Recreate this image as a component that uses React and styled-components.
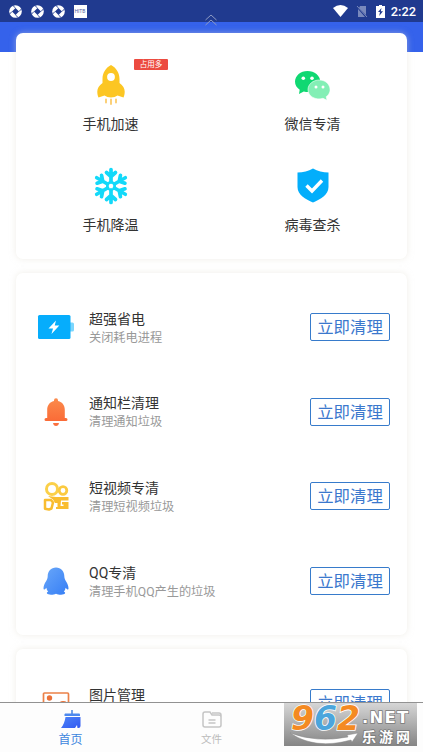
import React from 'react'
import styled, { createGlobalStyle } from 'styled-components'

const GlobalStyle = createGlobalStyle`
  * {
    box-sizing: border-box;
  }

  body {
    margin: 0;
    background: #fff;
    font-family: Roboto, 'Noto Sans CJK SC', sans-serif;
  }

  svg {
    display: block;
  }
`

const Screen = styled.div`
  position: relative;
  display: flex;
  flex-direction: column;
  width: 423px;
  height: 752px;
  overflow: hidden;
`

const StatusBar = styled.header`
  display: flex;
  flex: none;
  justify-content: space-between;
  align-items: center;
  height: 22px;
  padding: 0 7px 0 9px;
  background: #203a8f;
  color: #fff;
`

const StatusGroup = styled.div`
  display: flex;
  align-items: center;
  gap: ${props => props.$gap}px;
`

const Notice = styled.span`
  width: 13px;
  height: 13px;
  background: #fff;
  color: #52639f;
  font-size: 5px;
  line-height: 13px;
  text-align: center;
`

const Clock = styled.span`
  margin-left: -2px;
  padding-top: 1px;
  font-size: 12.8px;
  font-weight: 500;
  line-height: 22px;
`

const PullHint = styled.div`
  position: absolute;
  top: 14px;
  left: 205px;
`

const Content = styled.main`
  display: flex;
  flex: 1;
  flex-direction: column;
  gap: 14px;
  min-height: 0;
  padding: 11px 16px 0;
  overflow: hidden;
  background: linear-gradient(#3562eb 30px, #fff 30px);
`

const Card = styled.section`
  flex: none;
  border-radius: 7px;
  background: #fff;
  box-shadow: 0 0 6px rgba(225, 222, 210, .5);
`

const ToolCard = styled(Card)`
  display: grid;
  grid-template-columns: 202px 202px;
  grid-auto-rows: 101px;
  justify-content: center;
  height: 226px;
  padding-top: 32px;
`

const Tool = styled.div`
  position: relative;
  display: flex;
  flex-direction: column;
  align-items: center;
  color: #333;
  font-size: 14px;
  line-height: 20px;

  svg {
    margin-bottom: 9px;
  }
`

const Tag = styled.span`
  position: absolute;
  top: -6px;
  left: 124.5px;
  width: 34px;
  height: 11px;
  border-radius: 1px;
  background: #ec4b40;
  color: #fff;
  font-size: 7.5px;
  line-height: 11px;
  text-align: center;
`

const ListCard = styled(Card)`
  padding: 12px 17px 11.5px 20px;
`

const Row = styled.div`
  display: flex;
  align-items: center;
  height: 84.6px;
`

const RowIcon = styled.div`
  display: flex;
  flex: none;
  justify-content: center;
  width: 40px;
  margin-right: 13px;
`

const RowText = styled.div`
  flex: 1;
  padding-top: 2px;
  white-space: nowrap;
`

const Title = styled.div`
  color: #333;
  font-size: 14px;
  line-height: 19px;
`

const Subtitle = styled.div`
  color: #999;
  font-size: 12.2px;
  line-height: 18px;
`

const CleanButton = styled.button`
  flex: none;
  width: 80px;
  height: 28px;
  padding: 1px 0 0;
  border: 1px solid #377bcb;
  border-radius: 2px;
  background: #fff;
  color: #3b78cd;
  font-family: inherit;
  font-size: 16.4px;
  line-height: 25px;
  white-space: nowrap;
`

const TabBar = styled.nav`
  display: flex;
  flex: none;
  height: 50px;
  border-top: 1px solid #929292;
  background: #fdfdfd;
`

const Tab = styled.div`
  display: flex;
  flex: 0 0 141px;
  flex-direction: column;
  align-items: center;
  padding-top: 6px;
  color: ${props => (props.$active ? '#3d86de' : '#bcbcbc')};
  font-size: ${props => (props.$active ? 12 : 10.5)}px;
  line-height: 18px;

  svg {
    margin-bottom: 2px;
  }
`

const Watermark = styled.div`
  position: absolute;
  top: 703px;
  left: 284px;
  display: flex;
  width: 133px;
  height: 43px;
  padding: 3px 0 0 7px;
  background: linear-gradient(#d6d6d6, #858585);
  white-space: nowrap;
`

const MarkNumber = styled.div`
  width: 71px;
  font-family: 'DejaVu Sans', sans-serif;
  font-size: 33px;
  font-style: italic;
  font-weight: bold;
  line-height: 26px;
  color: #f48a22;
  paint-order: stroke fill;
  -webkit-text-stroke: 1.6px #fff;

  em {
    color: #4ba5dc;
  }
`

const MarkSide = styled.div`
  display: flex;
  flex-direction: column;
  padding-top: 2px;
`

const MarkText = styled.div`
  color: #fff;
  font-family: ${props => (props.$latin ? "'DejaVu Sans'" : "'Noto Sans CJK SC'")}, sans-serif;
  font-size: ${props => props.$size}px;
  font-weight: bold;
  letter-spacing: ${props => props.$spacing}px;
  line-height: 19px;
  paint-order: stroke fill;
  -webkit-text-stroke: 1.5px #777;
`

const MarkArrow = styled.svg`
  position: absolute;
  top: 29px;
  left: 6px;
`

const SwirlIcon = () => (
  <svg width="13" height="13" viewBox="0 0 13 13">
    <circle cx="6.500" cy="6.500" r="6.300" fill="#fff" />
    <path d="M6.500 3L10 6.500 6.500 10 3 6.500z" fill="#203a8f" />
    <path d="M6.500 3L4 .6M10 6.500L12.400 4M6.500 10L9 12.400M3 6.500L.6 9" stroke="#203a8f" strokeWidth=".9" />
  </svg>
)

const WifiIcon = () => (
  <svg width="15" height="12" viewBox="0 0 15 12">
    <path d="M0 3Q7.500-3 15 3L7.500 12z" fill="#fff" />
  </svg>
)

const NoSimIcon = () => (
  <svg width="12" height="13" viewBox="0 0 12 13" opacity=".4">
    <path d="M4 1h6v9L3 3zM2 4l7 8H2z" fill="#fff" />
    <path d="M1 1l10 11" stroke="#fff" />
  </svg>
)

const ChargeIcon = () => (
  <svg width="9" height="13" viewBox="0 0 9 13">
    <path d="M3 0h3v1h3v12H0V1h3z" fill="#fff" />
    <path d="M5.500 3L2 7h2l-.8 4L7 6.200H4.800z" fill="#203a8f" />
  </svg>
)

const RocketIcon = () => (
  <svg width="30" height="40" viewBox="0 0 30 40">
    <path d="M15 0C9.500 3 6.500 8 6.500 14v4C3 20.500 1.300 23.500 1.300 26.500c0 2 .3 4 1.200 6L8.500 30.500Q11 32.500 15 32.500T21.500 30.500l6 2c.9-2 1.200-4 1.200-6 0-3-1.700-6-5.200-8.500v-4C23.500 8 20.500 3 15 0z" fill="#fcc623" />
    <circle cx="15" cy="12" r="3.900" fill="#fff" />
    <path d="M10 34.500v3M15 34.500v4.500M20 34.500v3" stroke="#fbd078" strokeWidth="2" strokeLinecap="round" />
  </svg>
)

const WechatIcon = () => (
  <svg width="36" height="40" viewBox="0 0 36 40">
    <path d="M12.500 6C5.500 6 0 10.700 0 16.500c0 3.500 1.800 6.200 4.700 8.200L4 29l4.800-2.600c8 2.300 16.500-2 16.500-9.900C25.300 10.700 19.500 6 12.500 6z" fill="#10d872" />
    <circle cx="8.300" cy="13.200" r="1.800" fill="#fff" />
    <circle cx="17" cy="13.200" r="1.800" fill="#fff" />
    <path d="M24.500 15C18 15 13 19.200 13 24.700c0 6.700 7.700 10.800 15 8.600l4 2-.8-3.600C39 26 34 15 24.500 15z" fill="#83efb5" stroke="#fff" strokeWidth=".6" />
    <circle cx="21" cy="22" r="1.500" fill="#fff" />
    <circle cx="28" cy="22" r="1.500" fill="#fff" />
  </svg>
)

const SnowIcon = () => (
  <svg width="36" height="40" viewBox="-18 -20 36 40">
    <g stroke="#13d9f9" strokeWidth="3.700" strokeLinecap="round" strokeLinejoin="round" fill="none">
      {[0, 60, 120, 180, 240, 300].map(angle => (
        <path key={angle} transform={`rotate(${angle})`} d="M0-4v-12.500M-4.500-13.500L0-9.500l4.500-4" />
      ))}
      <circle r="3.800" strokeWidth="2.500" />
    </g>
  </svg>
)

const ShieldIcon = () => (
  <svg width="32" height="40" viewBox="0 0 32 40">
    <path d="M16 2.500Q9 6.500 .5 6.500V21c0 7.500 8 12.500 15.500 15.500C23.500 33.500 31.500 28.500 31.500 21V6.500Q23 6.500 16 2.500z" fill="#03aefb" />
    <path d="M9.500 19.500l5.500 5.500 10-10.500" fill="none" stroke="#fff" strokeWidth="3.400" />
  </svg>
)

const BatteryIcon = () => (
  <svg width="38" height="24" viewBox="0 0 38 24">
    <rect x="31" y="7.500" width="6" height="9" rx="1.500" fill="#7bd6fd" />
    <rect x="1" y="0" width="32.500" height="24" rx="1.500" fill="#06adfc" />
    <path d="M19 5.500l-7.500 8H16L14.500 19l7.800-8.500h-4.600z" fill="#fff" />
  </svg>
)

const BellIcon = () => (
  <svg width="24" height="28" viewBox="0 0 24 28">
    <linearGradient id="bell" x2="0" y2="1">
      <stop stopColor="#fb8b4c" />
      <stop offset="1" stopColor="#fa6b37" />
    </linearGradient>
    <path d="M10 2.200a2 2 0 014 0v.8c4.500 1 6.800 4.500 6.800 9v8h1.200a1.500 1.500 0 010 3H2a1.500 1.500 0 010-3h1.200v-8c0-4.500 2.300-8 6.800-9z" fill="url(#bell)" />
    <path d="M9 25h6q-.5 3-3 3t-3-3z" fill="#fa7140" />
  </svg>
)

const VideoIcon = () => (
  <svg width="26" height="30" viewBox="0 0 26 30">
    <g fill="none" stroke="#f9bd30" strokeLinejoin="round">
      <circle cx="9" cy="8" r="5.500" strokeWidth="3" stroke="#fbd049" />
      <circle cx="20" cy="9.500" r="3.800" strokeWidth="2.800" stroke="#fbca40" />
      <path d="M2 19h6l2 2.500-1.500 6L6 28.500l-4-.8z" strokeWidth="2.500" />
    </g>
    <path d="M5 15l8 1h12.500v3.500H18l-.5 5.500h3v-1.500H19V21h6.500v7H13v-2h1.500v-4H12l-2-3.500z" fill="#f9bd30" />
  </svg>
)

const PenguinIcon = () => (
  <svg width="26" height="28" viewBox="0 0 26 28">
    <linearGradient id="penguin" x2="1" y2="1">
      <stop stopColor="#69a7f9" />
      <stop offset="1" stopColor="#367ef5" />
    </linearGradient>
    <path d="M13 .5C8 .5 4.700 4.200 4.700 9c0 2-.5 3-1.500 5C1.300 17 .5 19 .5 21.500c0 1.800 1.200 1.300 3-.7 0 1.500.6 2.700 1.700 3.700-2.500 1.200-1.400 3.200 2.800 3.200 2 0 3.500-.3 5-1 1.500.7 3 1 5 1 4.200 0 5.300-2 2.800-3.200 1.100-1 1.700-2.200 1.700-3.700 1.800 2 3 2.500 3 .7 0-2.500-.8-4.500-2.700-7.500-1-2-1.500-3-1.500-5C21.300 4.200 18 .5 13 .5z" fill="url(#penguin)" />
  </svg>
)

const PictureIcon = () => (
  <svg width="28" height="22" viewBox="0 0 28 22">
    <rect x="1.500" y="1" width="25" height="20" rx="1" fill="none" stroke="#eb8148" strokeWidth="1.700" />
    <circle cx="7.500" cy="6" r="2.700" fill="#eb7138" />
    <path d="M3 20l8-6 4 2q1-7 6-7t4 4v7z" fill="#eb7138" />
  </svg>
)

const BroomIcon = () => (
  <svg width="22" height="20" viewBox="0 0 22 20">
    <linearGradient id="broom" x2="1" y2="1">
      <stop stopColor="#4d84f7" />
      <stop offset="1" stopColor="#3159f2" />
    </linearGradient>
    <path d="M12 1v4" stroke="#4582df" strokeWidth="1.500" />
    <path d="M5 4.500h14a1 1 0 011 1V7H4.500V5.500z" fill="#4c88ee" />
    <path d="M5.500 8h15v9q0 2-2 2h-1l-.5-3-2 3H1Q4.500 15 5.500 8z" fill="url(#broom)" />
  </svg>
)

const FolderIcon = () => (
  <svg width="22" height="20" viewBox="0 0 22 20" fill="none" stroke="#c5c5c5" strokeWidth="1.500">
    <path d="M2 16V5q0-2 2-2h5l2 3h7q2 0 2 2v8q0 2-2 2H4q-2 0-2-2zM11 4h7q2 0 2 2v3M7.500 11h7M7.500 14h7" />
  </svg>
)

const tools = [
  { label: '手机加速', icon: <RocketIcon />, tag: '占用多' },
  { label: '微信专清', icon: <WechatIcon /> },
  { label: '手机降温', icon: <SnowIcon /> },
  { label: '病毒查杀', icon: <ShieldIcon /> }
]

const cleaners = [
  { title: '超强省电', subtitle: '关闭耗电进程', icon: <BatteryIcon /> },
  { title: '通知栏清理', subtitle: '清理通知垃圾', icon: <BellIcon /> },
  { title: '短视频专清', subtitle: '清理短视频垃圾', icon: <VideoIcon /> },
  { title: 'QQ专清', subtitle: '清理手机QQ产生的垃圾', icon: <PenguinIcon /> }
]

// the subtitle of this row lies below the fold
const files = [
  { title: '图片管理', subtitle: '\u00a0', icon: <PictureIcon /> }
]

const CleanerList = ({ items }) => (
  <ListCard>
    {items.map(item => (
      <Row key={item.title}>
        <RowIcon>{item.icon}</RowIcon>
        <RowText>
          <Title>{item.title}</Title>
          <Subtitle>{item.subtitle}</Subtitle>
        </RowText>
        <CleanButton>立即清理</CleanButton>
      </Row>
    ))}
  </ListCard>
)

export default function App() {
  return (
    <Screen>
      <GlobalStyle />
      <StatusBar>
        <StatusGroup $gap={8.5}>
          <SwirlIcon />
          <SwirlIcon />
          <SwirlIcon />
          <Notice>HITB</Notice>
        </StatusGroup>
        <StatusGroup $gap={8}>
          <WifiIcon />
          <NoSimIcon />
          <ChargeIcon />
          <Clock>2:22</Clock>
        </StatusGroup>
      </StatusBar>
      <Content>
        <ToolCard>
          {tools.map(tool => (
            <Tool key={tool.label}>
              {tool.icon}
              {tool.label}
              {tool.tag && <Tag>{tool.tag}</Tag>}
            </Tool>
          ))}
        </ToolCard>
        <CleanerList items={cleaners} />
        <CleanerList items={files} />
      </Content>
      <TabBar>
        <Tab $active>
          <BroomIcon />
          首页
        </Tab>
        <Tab>
          <FolderIcon />
          文件
        </Tab>
      </TabBar>
      <PullHint>
        <svg width="12" height="12" viewBox="0 0 12 12" fill="none" stroke="#8e9bc4">
          <path d="M.5 6L6 1l5.500 5M.5 11L6 6l5.500 5" />
        </svg>
      </PullHint>
      <Watermark>
        <MarkNumber>9<em>6</em>2</MarkNumber>
        <MarkSide>
          <MarkText $latin $size={16.5} $spacing={1.2}>.NET</MarkText>
          <MarkText $size={14} $spacing={3}>乐游网</MarkText>
        </MarkSide>
        <MarkArrow width="69" height="14" viewBox="0 0 69 14">
          <path d="M0 1Q27 11 58 5l-1-2 11-2-6 9-1-2Q25 18 0 1z" fill="#fff" stroke="#888" strokeWidth=".5" />
        </MarkArrow>
      </Watermark>
    </Screen>
  )
}
